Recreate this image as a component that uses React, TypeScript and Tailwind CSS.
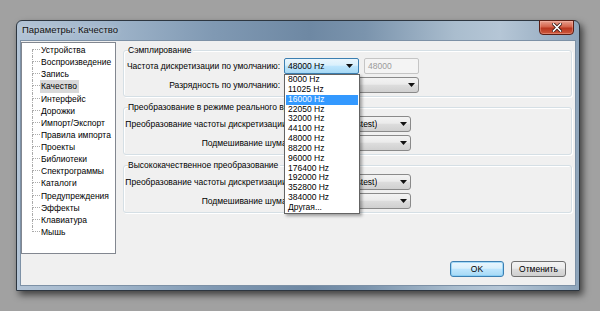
import React from "react";

const treeItems = [
  "Устройства",
  "Воспроизведение",
  "Запись",
  "Качество",
  "Интерфейс",
  "Дорожки",
  "Импорт/Экспорт",
  "Правила импорта",
  "Проекты",
  "Библиотеки",
  "Спектрограммы",
  "Каталоги",
  "Предупреждения",
  "Эффекты",
  "Клавиатура",
  "Мышь",
];

const rates = [
  "8000 Hz",
  "11025 Hz",
  "16000 Hz",
  "22050 Hz",
  "32000 Hz",
  "44100 Hz",
  "48000 Hz",
  "88200 Hz",
  "96000 Hz",
  "176400 Hz",
  "192000 Hz",
  "352800 Hz",
  "384000 Hz",
  "Другая...",
];

function Arrow() {
  return (
    <svg width="7" height="4" viewBox="0 0 7 4" className="shrink-0">
      <path d="M0 0H7L3.5 4Z" fill="#111" />
    </svg>
  );
}

function Combo({ text, className }: { text: string; className: string }) {
  return (
    <div
      className={
        "h-[16px] flex items-center justify-between rounded-[3px] border border-[#8a8a8a] bg-[linear-gradient(#f3f3f3,#ebebeb_45%,#dddddd_50%,#d0d0d0)] pl-[3px] pr-[3px] " +
        className
      }
    >
      <span className="whitespace-nowrap overflow-hidden leading-[14px]">{text}</span>
      <Arrow />
    </div>
  );
}

function Group({ title, children }: { title: string; children: React.ReactNode }) {
  return (
    <div className="rounded-[3px] border border-[#d5dfe5] shadow-[inset_1px_1px_0_#ffffff,1px_1px_0_#ffffff] pl-[4px] pr-[4px] pb-[3px]">
      <div className="-mt-[7px] w-fit bg-[#f0f0f0] pr-[2px] leading-[12px] whitespace-nowrap">{title}</div>
      {children}
    </div>
  );
}

function Label({ text }: { text: string }) {
  return (
    <div className="flex justify-end items-center h-[16px] whitespace-nowrap">
      <span>{text}</span>
    </div>
  );
}

export default function App() {
  return (
    <div className="w-[600px] h-[311px] bg-[#a1a1a1] pt-[20px] pl-[16px] overflow-hidden font-['Liberation_Sans',Arial,sans-serif] text-[8.5px] text-black">
      <div className="w-[564px] h-[271px] rounded-t-[6px] border border-[#2d3640] bg-[linear-gradient(90deg,#b2c3d5_0%,#a2b7cc_15%,#8099b3_35%,#6e88a3_52%,#7b94ad_62%,#aabdce_78%,#b5c6d6_86%,#8ea5bb_100%)] shadow-[3px_4px_7px_rgba(0,0,0,0.6)] flex flex-col">
        {/* Title bar */}
        <div className="h-[19px] flex items-start justify-between">
          <div className="pl-[5px] h-[19px] flex items-center text-[9.5px] text-[#111] [text-shadow:0_0_5px_rgba(255,255,255,0.55)]">
            Параметры: Качество
          </div>
          <div className="-mt-[1px] mr-[5px] w-[35px] h-[15px] rounded-b-[4px] border border-[#5a1e14] bg-[linear-gradient(#e9a08f,#d4624a_45%,#b8361f_55%,#cf5a3d)] flex items-center justify-center shadow-[inset_0_0_0_1px_rgba(255,200,190,0.35)]">
            <svg width="10" height="9" viewBox="0 0 10 9">
              <path d="M1.5 1L8.5 8M8.5 1L1.5 8" stroke="#3a1a14" strokeWidth="3.2" strokeLinecap="square" />
              <path d="M1.5 1L8.5 8M8.5 1L1.5 8" stroke="#ffffff" strokeWidth="1.6" strokeLinecap="square" />
            </svg>
          </div>
        </div>

        {/* Client area */}
        <div className="mx-[3px] mb-[4px] border border-[#7d91a6] bg-[#f0f0f0] flex-1 flex flex-col">
          <div className="h-[214px] flex">
            {/* Tree */}
            <div className="mt-[1px] w-[95px] h-[212px] border border-[#828790] bg-white pl-[10px] pt-[1px]">
              {treeItems.map((t, i) => {
                const first = i === 0;
                const last = i === treeItems.length - 1;
                return (
                  <div key={t} className="flex h-[12.13px]">
                    <div className="w-[8px] flex flex-col shrink-0">
                      <div
                        className={
                          first
                            ? "h-[6px] border-b border-dotted border-[#ababab]"
                            : "h-[6px] border-l border-b border-dotted border-[#ababab]"
                        }
                      />
                      <div className={last ? "flex-1" : "flex-1 border-l border-dotted border-[#ababab]"} />
                    </div>
                    <span
                      className={
                        t === "Качество"
                          ? "leading-[12px] whitespace-nowrap pl-[1px] pr-[2px] bg-[#d9d9d9]"
                          : "leading-[12px] whitespace-nowrap pl-[1px] pr-[2px]"
                      }
                    >
                      {t}
                    </span>
                  </div>
                );
              })}
            </div>

            {/* Right panel */}
            <div className="ml-[7px] mt-[9px] w-[449px] flex flex-col gap-[10px]">
              <Group title="Сэмплирование">
                <div className="mt-[2px] grid grid-cols-[152px_auto] gap-x-[4px] gap-y-[3px]">
                  <Label text="Частота дискретизации по умолчанию:" />
                  <div className="flex gap-[5px]">
                    <div className="relative w-[75px]">
                      <div className="h-[16px] flex items-center justify-between rounded-[2px] border border-[#3c7fb1] bg-[linear-gradient(#eaf6fd,#d9f0fc_45%,#bee6fd_50%,#a7d9f5)] pl-[3px] pr-[5px]">
                        <span className="leading-[14px]">48000 Hz</span>
                        <Arrow />
                      </div>
                      <div className="absolute left-0 top-full w-[76px] border border-[#646464] bg-white shadow-[2px_2px_3px_rgba(0,0,0,0.35)] z-10">
                        {rates.map((r) => (
                          <div
                            key={r}
                            className={
                              r === "16000 Hz"
                                ? "h-[9.85px] leading-[9.85px] pl-[2px] mx-[1px] bg-[#3399ff] text-white whitespace-nowrap"
                                : "h-[9.85px] leading-[9.85px] pl-[2px] mx-[1px] whitespace-nowrap"
                            }
                          >
                            {r}
                          </div>
                        ))}
                      </div>
                    </div>
                    <div className="w-[55px] h-[16px] rounded-[2px] border border-[#c5c5c5] bg-[#f4f4f4] pl-[3px] flex items-center text-[#9b9b9b]">
                      48000
                    </div>
                  </div>
                  <Label text="Разрядность по умолчанию:" />
                  <Combo className="w-[135px]" text="32-bit float" />
                </div>
              </Group>

              <Group title="Преобразование в режиме реального времени">
                <div className="mt-[3px] grid grid-cols-[161px_auto] gap-x-[4px] gap-y-[3px]">
                  <Label text="Преобразование частоты дискретизации:" />
                  <Combo className="w-[118px]" text="Low Quality (Fastest)" />
                  <Label text="Подмешивание шума:" />
                  <Combo className="w-[118px]" text="Нет" />
                </div>
              </Group>

              <Group title="Высококачественное преобразование">
                <div className="mt-[3px] grid grid-cols-[161px_auto] gap-x-[4px] gap-y-[3px]">
                  <Label text="Преобразование частоты дискретизации:" />
                  <Combo className="w-[118px]" text="Low Quality (Fastest)" />
                  <Label text="Подмешивание шума:" />
                  <Combo className="w-[118px]" text="Треугольный" />
                </div>
              </Group>
            </div>
          </div>

          {/* Buttons */}
          <div className="mt-[6px] h-[16px] flex justify-end gap-[7px] pr-[9px]">
            <div className="w-[54px] h-[16px] rounded-[3px] border border-[#3c7fb1] bg-[linear-gradient(#eaf6fd,#d9f0fc_45%,#bee6fd_50%,#a7d9f5)] shadow-[inset_0_0_0_1px_rgba(120,200,245,0.6)] flex items-center justify-center">
              OK
            </div>
            <div className="w-[55px] h-[16px] rounded-[3px] border border-[#707070] bg-[linear-gradient(#f3f3f3,#ebebeb_45%,#dddddd_50%,#cfcfcf)] flex items-center justify-center">
              Отменить
            </div>
          </div>
        </div>
      </div>
    </div>
  );
}
